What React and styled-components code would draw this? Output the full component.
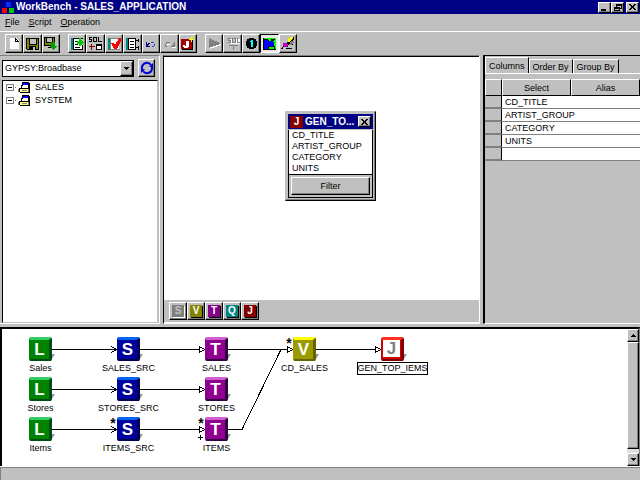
import React, { useState } from "react";
import styled, { createGlobalStyle } from "styled-components";

const face = "#c0c0c0";
const shadow = "#808080";
const navy = "#000084";

const GlobalStyle = createGlobalStyle`
  * {
    box-sizing: border-box;
  }
  body {
    margin: 0;
    background: ${face};
    color: #000;
    font: 9px/13px "Liberation Sans", sans-serif;
  }
  button, select {
    font: inherit;
    color: inherit;
  }
`;

const Root = styled.div`
  display: flex;
  flex-direction: column;
  min-height: 100vh;
`;

const TitleBar = styled.header`
  display: flex;
  align-items: center;
  height: 14px;
  padding: 0 1px 0 2px;
  background: ${navy};
`;

const Title = styled.h1`
  flex: 1;
  margin: 0 0 0 1px;
  color: #fff;
  font: bold 10px/14px "Liberation Sans", sans-serif;
`;

const raised = `
  border: 1px solid;
  border-color: #fff #000 #000 #fff;
  box-shadow: inset -1px -1px ${shadow};
`;

const sunken = `
  border: 1px solid;
  border-color: #000 #fff #fff #000;
`;

const WindowButton = styled.button`
  ${raised}
  display: flex;
  align-items: center;
  justify-content: center;
  width: 13px;
  height: 11px;
  margin-left: ${p => (p.$apart ? 2 : 0)}px;
  padding: 0;
  background: ${face};
`;

const MenuBar = styled.nav`
  display: flex;
  gap: 9px;
  height: 18px;
  padding: 2px 5px;
  border-bottom: 1px solid #fff;
`;

const MenuItem = styled.button`
  padding: 0;
  border: 0;
  background: none;
  line-height: 13px;

  &::first-letter {
    text-decoration: underline;
  }
`;

const ToolBar = styled.div`
  display: flex;
  gap: 8px;
  height: 23px;
  padding: 2px 5px;
`;

const ToolGroup = styled.div`
  display: flex;
  width: ${p => p.$width}px;
`;

const ToolButton = styled.button`
  ${p => (p.$pressed ? sunken : raised)}
  display: flex;
  flex: 1;
  align-items: center;
  justify-content: center;
  min-width: 0;
  height: 19px;
  padding: 0;
  background: ${p => (p.$pressed ? "#e8e8e8" : face)};
`;

const Workspace = styled.main`
  display: grid;
  grid-template-columns: 160px 1fr 157px;
  gap: 3px;
  flex: 269 0 0;
  margin-bottom: 3px;
`;

const Column = styled.section`
  display: flex;
  flex-direction: column;
  min-width: 0;
  border-top: 1px solid ${shadow};
  border-bottom: 1px solid #fff;
`;

const Sources = styled(Column)`
  border-right: 1px solid #fff;
`;

const SourceBar = styled.div`
  display: flex;
  align-items: center;
  gap: 4px;
  height: 24px;
  padding: 0 4px 0 2px;
`;

const Combo = styled.div`
  display: flex;
  flex: 1;
  height: 17px;
  border: 1px solid #000;
  background: #fff;
`;

const ComboSelect = styled.select`
  flex: 1;
  min-width: 0;
  padding: 0 2px;
  border: 0;
  background: #fff;
  appearance: none;
`;

const ComboArrow = styled.span`
  ${raised}
  display: flex;
  align-items: center;
  justify-content: center;
  width: 13px;
  background: ${face};
`;

const RefreshButton = styled.button`
  ${raised}
  display: flex;
  align-items: center;
  justify-content: center;
  width: 17px;
  height: 18px;
  padding: 0;
  background: ${face};
`;

const Tree = styled.ul`
  flex: 1;
  margin: 0 1px 0 2px;
  padding: 0 2px;
  border: 1px solid #000;
  border-right-color: ${face};
  border-bottom-color: ${face};
  background: #fff;
  list-style: none;
`;

const TreeItem = styled.li`
  display: flex;
  align-items: center;
  gap: 4px;
  height: 13px;
`;

const TreeIcons = styled.span`
  display: flex;
  align-items: center;
  gap: 1px;
`;

const Designer = styled(Column)`
  border-left: 1px solid #000;
  border-right: 1px solid #fff;
`;

const Canvas = styled.div`
  position: relative;
  flex: 1;
  border-top: 1px solid #000;
  background: #fff;
`;

const Dialog = styled.div`
  position: absolute;
  top: 54px;
  left: 121px;
  width: 91px;
  padding: 2px;
  border: 1px solid;
  border-color: ${face} #000 #000 ${face};
  background: ${face};
  box-shadow: inset -1px -1px ${shadow};
`;

const DialogTitle = styled.div`
  display: flex;
  align-items: center;
  gap: 2px;
  height: 15px;
  padding: 0 2px;
  background: ${navy};
  color: #fff;
  font: bold 10px/15px "Liberation Sans", sans-serif;
`;

const DialogName = styled.span`
  flex: 1;
  white-space: nowrap;
`;

const DialogBadge = styled.span`
  width: 13px;
  height: 12px;
  background: #840000;
  line-height: 12px;
  text-align: center;
`;

const FieldList = styled.ul`
  margin: 1px 0 0;
  padding: 0 3px;
  border: 1px solid #000;
  border-top: 0;
  background: #fff;
  line-height: 11px;
  list-style: none;
`;

const DialogFooter = styled.div`
  padding: 2px;
  border: 1px solid #000;
  border-top: 0;
`;

const FilterButton = styled.button`
  ${raised}
  width: 100%;
  height: 18px;
  padding: 0;
  background: ${face};
`;

const Palette = styled.div`
  display: flex;
  height: 23px;
  padding: 2px 5px;
  border-bottom: 1px solid #fff;
`;

const PaletteButton = styled.button`
  ${raised}
  display: flex;
  align-items: center;
  justify-content: center;
  width: 18px;
  height: 18px;
  padding: 0;
  background: ${face};
`;

const PaletteTile = styled.span`
  width: 12px;
  height: 12px;
  background: ${p => p.$color};
  color: ${p => (p.$dim ? face : "#fff")};
  font: bold 10px/12px "Liberation Sans", sans-serif;
  text-align: center;
  box-shadow: 1px 1px ${p => (p.$dim ? "#fff" : "#000")};
`;

const Properties = styled(Column)`
  border-top: 1px solid #000;
  border-left: 2px solid #000;
`;

const Tabs = styled.div`
  display: flex;
  align-items: flex-end;
  height: 18px;
`;

const Tab = styled.button`
  height: ${p => (p.$active ? 17 : 15)}px;
  padding: 0 3px;
  border: 0;
  border-top: 1px solid #fff;
  border-left: 1px solid #fff;
  border-right: 1px solid #000;
  background: ${face};
  white-space: nowrap;
`;

const Grid = styled.table`
  width: 100%;
  border-top: 5px solid ${face};
  border-collapse: separate;
  border-spacing: 0;
  table-layout: fixed;
  box-shadow: 0 -1px #fff;

  th, td {
    height: 13px;
    padding: 0 3px;
    line-height: 12px;
    text-align: left;
    white-space: nowrap;
  }
  td {
    border-bottom: 1px solid ${shadow};
    background: #fff;
  }
  thead th {
    height: 17px;
    border: 1px solid;
    border-color: #fff #000 #000 #fff;
    font-weight: normal;
    text-align: center;
  }
  tbody th {
    border-right: 1px solid #000;
    border-bottom: 2px solid ${shadow};
  }
`;

const Flow = styled.section`
  display: flex;
  flex: 137 0 0;
  border: 1px solid #000;
  border-top-width: 2px;
  border-left-width: 2px;
  border-color: #000 ${shadow} ${face} #000;
  background: #fff;
`;

const FlowCanvas = styled.div`
  position: relative;
  flex: 1;
  overflow: hidden;
`;

const Edges = styled.svg`
  position: absolute;
  top: 0;
  left: 0;
  width: 100%;
  height: 100%;
  font: bold 14px "Liberation Sans", sans-serif;
`;

const Node = styled.div`
  position: absolute;
  left: ${p => p.$x}px;
  top: ${p => p.$y}px;
  display: flex;
  flex-direction: column;
  align-items: center;
  width: 81px;
`;

const Cube = styled.div`
  position: relative;
  width: 23px;
  height: 24px;
  border-style: solid;
  border-width: 3px 3px 2px 1px;
  border-color: ${p => p.$light} ${p => p.$dark} ${p => p.$dark} ${p => p.$color};
  border-radius: 2px;
  background: ${p => p.$color};
  color: #fff;
  font: bold 17px/20px "Liberation Sans", sans-serif;
  text-align: center;

  &::after {
    content: "";
    position: absolute;
    right: -6px;
    bottom: 0;
    border-bottom: 5px solid transparent;
    border-left: 3px solid #999;
  }
`;

const JobFace = styled.span`
  display: block;
  width: 17px;
  height: 17px;
  margin-left: 1px;
  background: #fff;
  color: ${shadow};
  line-height: 18px;
`;

const NodeLabel = styled.span`
  margin-top: 1px;
  border: 1px solid ${p => (p.$selected ? "#000" : "transparent")};
  line-height: 11px;
`;

const ScrollBar = styled.div`
  display: flex;
  flex-direction: column;
  width: 12px;
  background: #e0e0e0;
`;

const ScrollButton = styled.button`
  ${raised}
  display: flex;
  align-items: center;
  justify-content: center;
  height: 13px;
  padding: 0;
  background: ${face};
`;

const ScrollThumb = styled.div`
  ${raised}
  flex: 1;
  margin-bottom: 4px;
  background: ${face};
`;

const StatusBar = styled.footer`
  height: 13px;
  border-top: 1px solid ${shadow};
  border-left: 1px solid ${shadow};
  box-shadow: 0 -1px #fff;
`;

const Svg = ({ size = 15, children }) => (
  <svg width={size} height={size} viewBox={`0 0 ${size} ${size}`} shapeRendering="crispEdges" aria-hidden="true">
    {children}
  </svg>
);

const Arrow = ({ up }) => (
  <svg width="5" height="3" viewBox="0 0 5 3" shapeRendering="crispEdges" aria-hidden="true">
    <path d={up ? "M2 0h1v1h1v1h1v1H0V2h1V1h1z" : "M0 0h5v1H4v1H3v1H2V2H1V1H0z"} />
  </svg>
);

const AppLogo = () => (
  <svg width="13" height="13" viewBox="0 0 13 13" shapeRendering="crispEdges" aria-hidden="true">
    <path fill="#0030ff" d="M4 1h5v5H4z" />
    <path fill="#ff0000" d="M0 7h5v5H0z" />
    <path fill="#00c800" d="M7 7h5v5H7z" />
  </svg>
);

const CloseGlyph = () => (
  <svg width="7" height="6" viewBox="0 0 7 6" shapeRendering="crispEdges" aria-hidden="true">
    <path d="M0 0h2v1h1v1h1V1h1V0h2v1H6v1H5v2h1v1h1v1H5V5H4V4H3v1H2v1H0V5h1V4h1V2H1V1H0z" />
  </svg>
);

const icons = {
  New: (
    <Svg>
      <path fill="#fff" d="M3 2h6l3 3v8H3z" />
      <path fill="#000" d="M8 2h1v1h1v1h1v1h1v1H8z" />
      <path fill="#fff" d="M9 4h1v1H9z" />
    </Svg>
  ),
  Save: (
    <Svg>
      <path fill="#000" d="M1 2h13v12H2v-1H1z" />
      <path fill="#848400" d="M2 3h2v6h8V3h1v10h-2V10H4v3H2z" />
      <path fill={face} d="M5 3h6v5H5zM8 11h2v3H8z" />
    </Svg>
  ),
  "Save as": (
    <Svg>
      <path fill="#000" d="M1 1h11v9H1z" />
      <path fill="#848400" d="M2 2h1v5h7V2h1v7H2z" />
      <path fill={face} d="M4 2h5v4H4z" />
      <path fill="#00a000" d="M8 6h4v4h2l-4 4-4-4h2z" />
      <path fill="#000" d="M5 11h3v1H5z" />
    </Svg>
  ),
  "Run script": (
    <Svg>
      <path fill="#008484" d="M1 2h3v12H1z" />
      <path fill="#fff" d="M4 3h8v10H4z" />
      <path fill="#000" d="M3 2h10v1H4v10h9v1H3zM5 5h3v1H5zM5 8h3v1H5zM5 11h5v1H5zM12 9h1v4h-1z" />
      <path fill="#00c800" d="M9 2h2v2h1v1h1v1h1v1h-1v1h-1v1h-1v1H9V8H7V5h2z" />
    </Svg>
  ),
  "Show SQL": (
    <Svg>
      <path fill="#000" d="M1 1h3v1H2v1h2v3H1V5h2V4H1zM5 1h4v5H5zM10 1h1v4h3v1h-4z" />
      <path fill={face} d="M6 2h2v3H6z" />
      <path fill="#840000" d="M3 8h1v2h3v1H4v3H3v-3H1v-1h2z" />
      <path fill="#000" d="M8 8h6v6H8z" />
      <path fill="#fff" d="M9 10h4v3H9z" />
    </Svg>
  ),
  Validate: (
    <Svg>
      <path fill="#008484" d="M1 2h3v12H1z" />
      <path fill="#fff" d="M4 3h8v10H4z" />
      <path fill={shadow} d="M3 2h9v1H4v10h9v1H3z" />
      <path fill="#ff0000" d="M4 7h3l1 2 4-7h2v3l-4 8H7z" />
    </Svg>
  ),
  Properties: (
    <Svg>
      <path fill="#008484" d="M1 2h3v12H1z" />
      <path fill="#fff" d="M4 3h6v10H4z" />
      <path fill="#000" d="M3 2h8v1H4v10h7v1H3zM5 5h4v1H5zM5 8h4v1H5zM5 11h4v1H5zM10 3h1v10h-1zM11 4h2V3h1v3h-1V5h-2zM11 11h2v-1h1v4h-1v-2h-2z" />
    </Svg>
  ),
  Undo: (
    <Svg>
      <path fill={navy} d="M3 6h1v2h1V7h2v1H6v1H5v1h2v1H3z" />
      <path fill="#4040a8" d="M8 6h3v1H8zM11 8h1v2h-1zM9 10h2v1H9z" />
    </Svg>
  ),
  Redo: (
    <Svg>
      <path fill={shadow} d="M12 6h1v5H9v-1h1V9h1V7h1zM4 6h4v1H5v1H4zM3 8h1v2h1v1H3z" />
      <path fill="#fff" d="M10 11h4v1h-4zM5 8h3v1H5z" />
    </Svg>
  ),
  "New job": (
    <Svg>
      <path fill="#000" d="M2 13h10V4h1v10H2z" />
      <path fill="#a00000" d="M1 3h11v10H1z" />
      <path fill="#fff" d="M6 5h3v6H8v1H4v-1H3V9h2v1h1z" />
      <path fill="#ffff00" d="M11 1h1v2h2v1h-2v2h-1V4H9V3h2zM13 0h1v2h-1z" />
    </Svg>
  ),
  Run: (
    <Svg>
      <path fill="#fff" d="M3 3l11 5v1L3 13z" />
      <path fill={shadow} d="M2 2l11 5v1L2 12z" />
    </Svg>
  ),
  "Run SQL": (
    <Svg>
      <path fill="#fff" d="M5 3h10v5H5z" />
      <path fill={shadow} d="M3 2h3v1H4v1h2v3H3V6h2V5H3zM7 2h4v5H7zM12 2h1v4h2v1h-3zM4 9h9v1H9v4H8v-4H4z" />
      <path fill={face} d="M8 3h2v3H8z" />
    </Svg>
  ),
  "Single step": (
    <Svg>
      <path fill="#000" d="M5 2h5v1h2v2h1v5h-1v2h-2v1H5v-1H3v-2H2V5h1V3h2z" />
      <path fill="#00ffff" d="M7 4h2v7H7V6H6V5h1z" />
    </Svg>
  ),
  "Data view": (
    <Svg>
      <path fill="#00ff00" d="M2 2h12v11H2z" />
      <path fill="#0000ff" d="M2 4h4v1h5v1h1v4h-1v1H6v2H2z" />
      <path fill="#000" d="M1 2h1v11h12v1H1zM2 3h4v1H2zM6 4h1v1H6zM9 3h4v1h-1v1H9zM6 10h3v1H7v2H6zM11 10h2v3h-1v-2h-1z" />
    </Svg>
  ),
  Clear: (
    <Svg>
      <path fill="#000" d="M2 11L12 1h2v2L8 9v2H3v2H1zM9 8h4v1H9zM6 12h6v1H6z" />
      <path fill="#ffff00" d="M8 3l3-2h2v1L9 6H8z" />
      <path fill="#c000c0" d="M3 7h3l2 2-2 2H4L3 10z" />
      <path fill={shadow} d="M11 5h3v1l-3 3H9z" />
    </Svg>
  )
};

const toolGroups = [
  { width: 55, tools: ["New", "Save", "Save as"] },
  { width: 129, tools: ["Run script", "Show SQL", "Validate", "Properties", "Undo", "Redo", "New job"] },
  { width: 92, tools: ["Run", "Run SQL", "Single step", "Data view", "Clear"] }
];

const palette = [
  { letter: "S", color: shadow, disabled: true },
  { letter: "V", color: "#848400" },
  { letter: "T", color: "#840084" },
  { letter: "Q", color: "#008484" },
  { letter: "J", color: "#840000" }
];

const kinds = {
  L: { color: "#008400", light: "#32cd64", dark: "#004c18" },
  S: { color: "#00009c", light: "#0064ff", dark: "#000050" },
  T: { color: "#900090", light: "#d060d0", dark: "#300040" },
  V: { color: "#9c9c00", light: "#ffff00", dark: "#646400" },
  J: { color: "#d00000", light: "#ff3020", dark: "#840000" }
};

const nodes = [
  { kind: "L", label: "Sales", x: -2, y: 8 },
  { kind: "S", label: "SALES_SRC", x: 86, y: 8 },
  { kind: "T", label: "SALES", x: 174, y: 8 },
  { kind: "V", label: "CD_SALES", x: 262, y: 8 },
  { kind: "J", label: "GEN_TOP_IEMS", x: 350, y: 8, selected: true },
  { kind: "L", label: "Stores", x: -2, y: 48 },
  { kind: "S", label: "STORES_SRC", x: 86, y: 48 },
  { kind: "T", label: "STORES", x: 174, y: 48 },
  { kind: "L", label: "Items", x: -2, y: 88 },
  { kind: "S", label: "ITEMS_SRC", x: 86, y: 88 },
  { kind: "T", label: "ITEMS", x: 174, y: 88 }
];

const rows = [20, 60, 100];
const fields = ["CD_TITLE", "ARTIST_GROUP", "CATEGORY", "UNITS"];

const DatabaseIcon = () => (
  <svg width="13" height="12" viewBox="0 0 13 12" shapeRendering="crispEdges" aria-hidden="true">
    <path fill="#000" d="M4 0h7v1h1v10H2v-1H1V6h2V3h1z" />
    <path fill="#0000ff" d="M5 1h5v2H5z" />
    <path fill="#fff" d="M5 3h5v3H4V4h1z" />
    <path fill="#ffff84" d="M2 7h8v3H2z" />
    <path fill={shadow} d="M0 7h1v3H0zM4 8h5v1H4zM10 7h1v3h-1z" />
  </svg>
);

const Expander = () => (
  <svg width="12" height="9" viewBox="0 0 12 9" shapeRendering="crispEdges" aria-hidden="true">
    <path fill={shadow} d="M1 1h8v7H1zM10 4h1v1h-1z" />
    <path fill="#fff" d="M2 2h6v5H2z" />
    <path d="M3 4h4v1H3z" />
  </svg>
);

function App() {
  const [tab, setTab] = useState("Columns");

  return (
    <Root>
      <GlobalStyle />
      <TitleBar>
        <AppLogo />
        <Title>WorkBench - SALES_APPLICATION</Title>
        <WindowButton aria-label="Minimize">
          <svg width="7" height="7" aria-hidden="true"><path d="M0 5h5v2H0z" /></svg>
        </WindowButton>
        <WindowButton aria-label="Restore">
          <svg width="8" height="7" viewBox="0 0 8 7" shapeRendering="crispEdges" aria-hidden="true">
            <path fillRule="evenodd" d="M2 0h6v5H6V4h1V2H3v1H2zM0 3h6v4H0zM1 5v1h4V5z" />
          </svg>
        </WindowButton>
        <WindowButton $apart aria-label="Close"><CloseGlyph /></WindowButton>
      </TitleBar>
      <MenuBar>
        {["File", "Script", "Operation"].map(name => <MenuItem key={name}>{name}</MenuItem>)}
      </MenuBar>
      <ToolBar>
        {toolGroups.map(group => (
          <ToolGroup key={group.width} $width={group.width}>
            {group.tools.map(name => (
              <ToolButton key={name} aria-label={name} $pressed={name === "Data view"}>
                {icons[name]}
              </ToolButton>
            ))}
          </ToolGroup>
        ))}
      </ToolBar>

      <Workspace>
        <Sources>
          <SourceBar>
            <Combo>
              <ComboSelect aria-label="Data source">
                <option>GYPSY:Broadbase</option>
              </ComboSelect>
              <ComboArrow><Arrow /></ComboArrow>
            </Combo>
            <RefreshButton aria-label="Refresh">
              <svg width="14" height="14" viewBox="0 0 14 14" fill="none" stroke="#0000d8" strokeWidth="2" aria-hidden="true">
                <path d="M2 9V6a5 5 0 0 1 9-2M12 5v3a5 5 0 0 1-9 2" />
                <path fill="#0000d8" stroke="none" d="M13 2v4H9zM1 12V8h4z" />
              </svg>
            </RefreshButton>
          </SourceBar>
          <Tree>
            {["SALES", "SYSTEM"].map(name => (
              <TreeItem key={name}>
                <TreeIcons>
                  <Expander />
                  <DatabaseIcon />
                </TreeIcons>
                {name}
              </TreeItem>
            ))}
          </Tree>
        </Sources>

        <Designer>
          <Canvas>
            <Dialog role="dialog" aria-label="GEN_TOP_ITEMS">
              <DialogTitle>
                <DialogBadge>J</DialogBadge>
                <DialogName>GEN_TO...</DialogName>
                <WindowButton aria-label="Close"><CloseGlyph /></WindowButton>
              </DialogTitle>
              <FieldList>
                {fields.map(field => <li key={field}>{field}</li>)}
              </FieldList>
              <DialogFooter>
                <FilterButton>Filter</FilterButton>
              </DialogFooter>
            </Dialog>
          </Canvas>
          <Palette>
            {palette.map(({ letter, color, disabled }) => (
              <PaletteButton key={letter} disabled={disabled}>
                <PaletteTile $color={color} $dim={disabled}>{letter}</PaletteTile>
              </PaletteButton>
            ))}
          </Palette>
        </Designer>

        <Properties>
          <Tabs role="tablist">
            {["Columns", "Order By", "Group By"].map(name => (
              <Tab key={name} role="tab" aria-selected={tab === name} $active={tab === name} onClick={() => setTab(name)}>
                {name}
              </Tab>
            ))}
          </Tabs>
          <Grid>
            <colgroup>
              <col width="17" />
              <col />
              <col />
            </colgroup>
            <thead>
              <tr>
                <th />
                <th>Select</th>
                <th>Alias</th>
              </tr>
            </thead>
            <tbody>
              {[...fields, ""].map(field => (
                <tr key={field}>
                  <th />
                  <td>{field}</td>
                  <td />
                </tr>
              ))}
            </tbody>
          </Grid>
        </Properties>
      </Workspace>

      <Flow>
        <FlowCanvas>
          <Edges shapeRendering="crispEdges">
            <g fill="none" stroke="#000">
              {rows.map(y => (
                <g key={y}>
                  <path d={`M50 ${y}.5H114M138 ${y}.5H197`} />
                  <path d={`M109.5 ${y - 3}.5l5 3l-5 3`} />
                  <path fill="#fff" d={`M197.5 ${y - 3}.5l5 3l-5 3z`} />
                </g>
              ))}
              <path d="M226 20.5H285M314 20.5H373M226 100.5H240L279 20.5" />
              <path fill="#fff" d="M285.5 17.5l5 3l-5 3zM373.5 17.5l5 3l-5 3z" />
            </g>
            <g textAnchor="middle">
              <text x="287" y="19">*</text>
              <text x="111" y="99">*</text>
              <text x="199" y="99">*</text>
            </g>
            <path d="M196 108h5v1h-5zM198 106h1v5h-1z" />
          </Edges>
          {nodes.map(({ kind, label, x, y, selected }) => {
            const { color, light, dark } = kinds[kind];
            return (
              <Node key={kind + label} $x={x} $y={y}>
                <Cube $color={color} $light={light} $dark={dark}>
                  {kind === "J" ? <JobFace>J</JobFace> : kind}
                </Cube>
                <NodeLabel $selected={selected}>{label}</NodeLabel>
              </Node>
            );
          })}
        </FlowCanvas>
        <ScrollBar>
          <ScrollButton aria-label="Scroll up"><Arrow up /></ScrollButton>
          <ScrollThumb />
          <ScrollButton aria-label="Scroll down"><Arrow /></ScrollButton>
        </ScrollBar>
      </Flow>
      <StatusBar />
    </Root>
  );
}

export default App;
